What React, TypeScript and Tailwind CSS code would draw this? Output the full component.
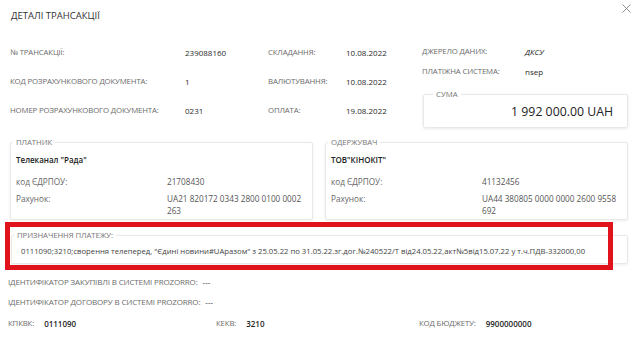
import { X } from 'lucide-react';
import type { ReactNode } from 'react';

const font = { fontFamily: '"Open Sans", "Noto Sans", sans-serif' };

function Label({ children }: { children: ReactNode }) {
  return <span className="text-[7.8px] text-[#6b6b6b] uppercase tracking-[-0.15px] whitespace-nowrap">{children}</span>;
}

function Value({ children }: { children: ReactNode }) {
  return <span className="text-[8px] text-[#2a2a2a]">{children}</span>;
}

function Party({ title, name, code, account }: { title: string; name: string; code: string; account: string }) {
  return (
    <fieldset className="border border-[#e8e8e8] rounded-[2px] shadow-[0_1px_3px_rgba(0,0,0,0.07)] px-[5px] pb-[2px] pt-0 min-w-0">
      <legend className="ml-[-3px] px-[3px] text-[7.8px] text-[#777] uppercase leading-[10px] tracking-[-0.1px]">{title}</legend>
      <div className="text-[8px] font-semibold text-[#222] leading-[14px] mt-[6px]">{name}</div>
      <div className="grid grid-cols-[151px_138px] text-[8.2px] text-[#666] leading-[12px] mt-[9px]">
        <span>код ЄДРПОУ:</span>
        <span className="text-[#555]">{code}</span>
        <span className="mt-[5px]">Рахунок:</span>
        <span className="mt-[5px] text-[#555]">{account}</span>
      </div>
    </fieldset>
  );
}

export default function App() {
  return (
    <div className="relative w-[640px] h-[337px] bg-white overflow-hidden" style={font}>
      <div className="flex items-start justify-between pl-[11px] pr-[6px]">
        <h1 className="mt-[8px] text-[9.5px] font-medium text-[#333] leading-[16px]">ДЕТАЛІ ТРАНСАКЦІЇ</h1>
        <X className="w-[15px] h-[15px] text-[#777] mt-[1px]" strokeWidth={1.3} />
      </div>

      <div className="flex pl-[10px] pr-[12px] mt-[14px]">
        <div className="grid grid-cols-[175px_83px_78px_76px] auto-rows-[29px] items-center">
          <Label>№ ТРАНСАКЦІЇ:</Label>
          <Value>239088160</Value>
          <Label>СКЛАДАННЯ:</Label>
          <Value>10.08.2022</Value>

          <Label>КОД РОЗРАХУНКОВОГО ДОКУМЕНТА:</Label>
          <Value>1</Value>
          <Label>ВАЛЮТУВАННЯ:</Label>
          <Value>10.08.2022</Value>

          <Label>НОМЕР РОЗРАХУНКОВОГО ДОКУМЕНТА:</Label>
          <Value>0231</Value>
          <Label>ОПЛАТА:</Label>
          <Value>19.08.2022</Value>
        </div>

        <div className="flex-1 flex flex-col">
          <div className="grid grid-cols-[103px_1fr] auto-rows-[20px] items-center mt-[4px]">
            <Label>ДЖЕРЕЛО ДАНИХ:</Label>
            <span className="text-[8px] text-[#222] italic font-medium">ДКСУ</span>
            <Label>ПЛАТІЖНА СИСТЕМА:</Label>
            <Value>nsep</Value>
          </div>
          <fieldset className="ml-[1px] mt-[7px] border border-[#e8e8e8] rounded-[2px] shadow-[0_1px_3px_rgba(0,0,0,0.09)] pl-[12px] pr-[14px] pt-[3px] pb-[5px]">
            <legend className="ml-[-3px] px-[3px] text-[7.8px] text-[#777] leading-[10px]">СУМА</legend>
            <div className="text-right text-[12.3px] text-[#222] leading-[20px]">1 992 000.00 UAH</div>
          </fieldset>
        </div>
      </div>

      <div className="grid grid-cols-[303px_303px] gap-x-[12px] pl-[10px] mt-[9px]">
        <Party title="ПЛАТНИК" name={'Телеканал "Рада"'} code="21708430" account="UA21 820172 0343 2800 0100 0002 263" />
        <Party title="ОДЕРЖУВАЧ" name={'ТОВ"КІНОКІТ"'} code="41132456" account="UA44 380805 0000 0000 2600 9558 692" />
      </div>

      <fieldset className="ml-[11px] mr-[12px] mt-[10px] border border-[#e8e8e8] rounded-[2px] shadow-[0_1px_3px_rgba(0,0,0,0.07)] px-[9px] pb-[6px] pt-0">
        <legend className="ml-[-7px] px-[3px] text-[7.8px] text-[#777] leading-[10px] tracking-[-0.1px]">ПРИЗНАЧЕННЯ ПЛАТЕЖУ:</legend>
        <div className="text-[7.7px] text-[#444] leading-[12px] whitespace-nowrap mt-[5px]">
          0111090;3210;сворення телеперед, "Єдині новини#UAразом" з 25.05.22 по 31.05.22.зг.дог.№240522/Т від24.05.22,акт№5від15.07.22 у т.ч.ПДВ-332000,00
        </div>
      </fieldset>

      <div className="pl-[8px] mt-[7px] flex flex-col">
        <div className="h-[21px] flex items-center gap-[5px]">
          <span className="text-[8px] text-[#6b6b6b] uppercase tracking-[-0.15px]">ІДЕНТИФІКАТОР ЗАКУПІВЛІ В СИСТЕМІ PROZORRO:</span>
          <Value>---</Value>
        </div>
        <div className="h-[20px] flex items-center gap-[5px]">
          <span className="text-[8px] text-[#6b6b6b] uppercase tracking-[-0.15px]">ІДЕНТИФІКАТОР ДОГОВОРУ В СИСТЕМІ PROZORRO:</span>
          <Value>---</Value>
        </div>
        <div className="h-[24px] grid grid-cols-[208px_203px_1fr] items-center">
          <div className="flex items-center gap-[10px]">
            <Label>КПКВК:</Label>
            <span className="text-[8px] text-[#222] font-semibold">0111090</span>
          </div>
          <div className="flex items-center gap-[10px]">
            <Label>КЕКВ:</Label>
            <span className="text-[8px] text-[#222] font-semibold">3210</span>
          </div>
          <div className="flex items-center gap-[10px]">
            <Label>КОД БЮДЖЕТУ:</Label>
            <span className="text-[8px] text-[#222] font-semibold">9900000000</span>
          </div>
        </div>
      </div>

      <div className="absolute left-[5px] top-[222px] w-[608px] h-[48px] border-[5px] border-[#e0121c] pointer-events-none" />
    </div>
  );
}
